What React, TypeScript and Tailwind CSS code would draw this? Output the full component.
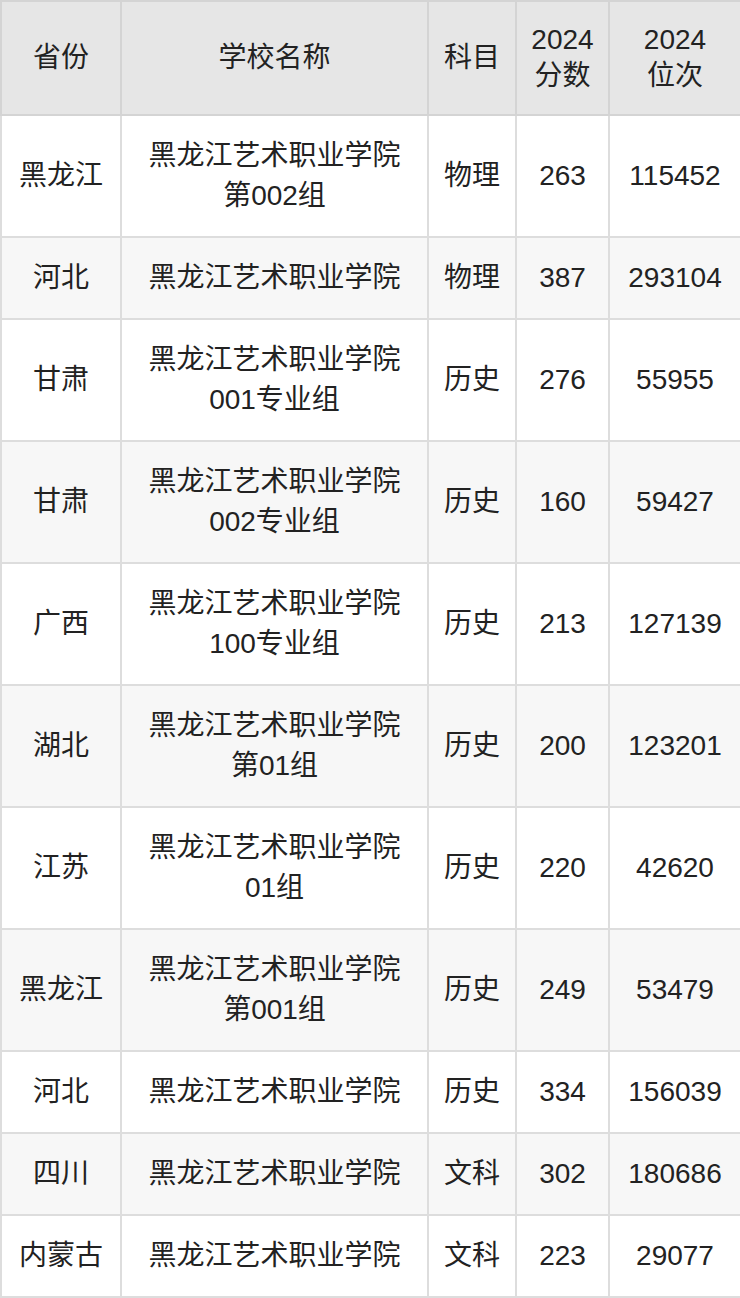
import React from 'react';

interface Row {
  province: string;
  school: string[];
  subject: string;
  score: string;
  rank: string;
}

const SCHOOL = '黑龙江艺术职业学院';

const rows: Row[] = [
  { province: '黑龙江', school: [SCHOOL, '第002组'], subject: '物理', score: '263', rank: '115452' },
  { province: '河北', school: [SCHOOL], subject: '物理', score: '387', rank: '293104' },
  { province: '甘肃', school: [SCHOOL, '001专业组'], subject: '历史', score: '276', rank: '55955' },
  { province: '甘肃', school: [SCHOOL, '002专业组'], subject: '历史', score: '160', rank: '59427' },
  { province: '广西', school: [SCHOOL, '100专业组'], subject: '历史', score: '213', rank: '127139' },
  { province: '湖北', school: [SCHOOL, '第01组'], subject: '历史', score: '200', rank: '123201' },
  { province: '江苏', school: [SCHOOL, '01组'], subject: '历史', score: '220', rank: '42620' },
  { province: '黑龙江', school: [SCHOOL, '第001组'], subject: '历史', score: '249', rank: '53479' },
  { province: '河北', school: [SCHOOL], subject: '历史', score: '334', rank: '156039' },
  { province: '四川', school: [SCHOOL], subject: '文科', score: '302', rank: '180686' },
  { province: '内蒙古', school: [SCHOOL], subject: '文科', score: '223', rank: '29077' },
];

const th = 'border-2 border-[#d4d4d4] px-[8px] py-[20px] font-normal leading-[36px] text-center align-middle';
const td = 'border-2 border-[#dddddd] px-[8px] py-[20px] leading-[40px] text-center align-middle';

export default function App() {
  return (
    <div className="w-[740px] bg-white text-[#222] text-[28px] font-['Liberation_Sans','Noto_Sans_CJK_SC',sans-serif]">
      <table className="w-[740px] table-fixed border-collapse">
        <colgroup>
          <col className="w-[120px]" />
          <col className="w-[307px]" />
          <col className="w-[88px]" />
          <col className="w-[93px]" />
          <col className="w-[132px]" />
        </colgroup>
        <thead>
          <tr className="bg-[#e6e6e6]">
            <th className={th}>省份</th>
            <th className={th}>学校名称</th>
            <th className={th}>科目</th>
            <th className={th}>
              2024
              <br />
              分数
            </th>
            <th className={th}>
              2024
              <br />
              位次
            </th>
          </tr>
        </thead>
        <tbody>
          {rows.map((r, i) => (
            <tr key={i} className={i % 2 === 0 ? 'bg-white' : 'bg-[#f7f7f7]'}>
              <td className={td}>{r.province}</td>
              <td className={td}>
                {r.school.map((line) => (
                  <div key={line}>{line}</div>
                ))}
              </td>
              <td className={td}>{r.subject}</td>
              <td className={td}>{r.score}</td>
              <td className={td}>{r.rank}</td>
            </tr>
          ))}
        </tbody>
      </table>
    </div>
  );
}
